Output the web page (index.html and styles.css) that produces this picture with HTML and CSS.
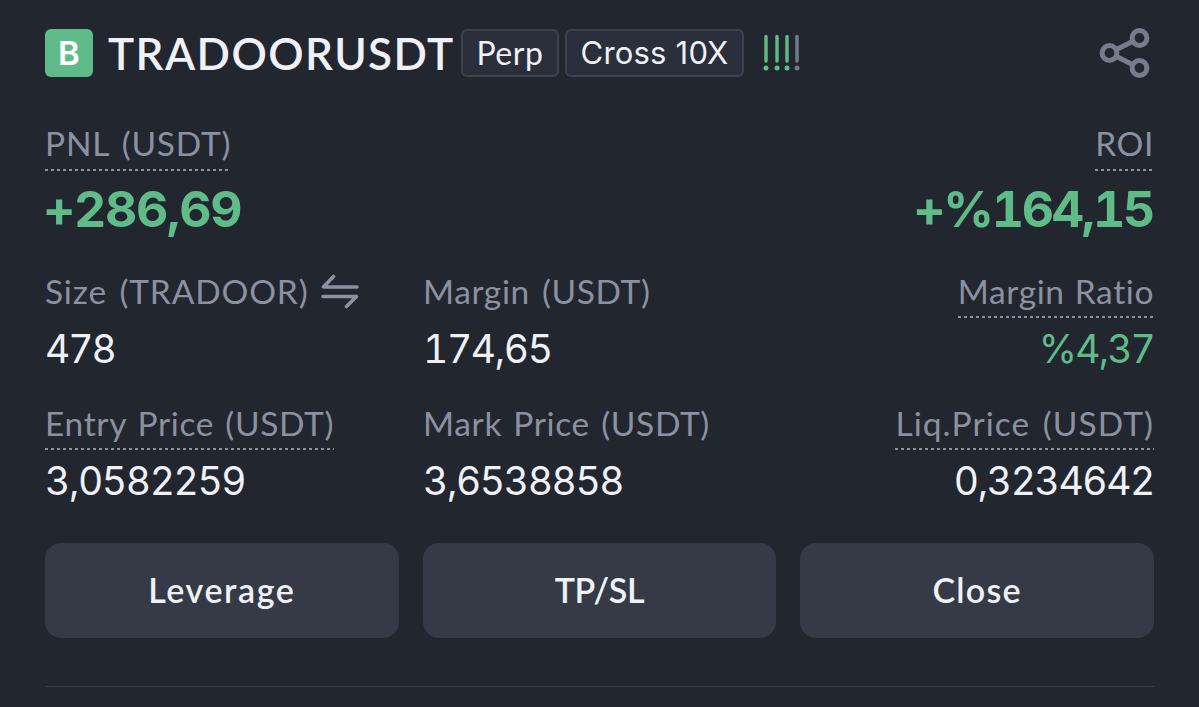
FILE: index.html
```
<!DOCTYPE html>
<html lang="en">
<head>
    <meta charset="UTF-8">
    <title>TRADOORUSDT Position</title>
    <link rel="stylesheet" href="styles.css">
</head>
<body>
    <div class="position">
        <!-- symbol, tags and share button -->
        <div class="header">
            <span class="side">B</span>
            <h1>TRADOORUSDT</h1>
            <span class="tag perp">Perp</span>
            <span class="tag cross">Cross 10X</span>
            <svg class="risk" width="38" height="38" viewBox="0 0 38 38">
                <g stroke-width="3.4" stroke-linecap="round" fill="none">
                    <path class="on" d="M3 2.5V27M14 2.5V27M24 2.5V27"/>
                    <path class="off" d="M34 2.5V27"/>
                </g>
                <g class="on-dots"><circle cx="3" cy="34" r="2.5"/><circle cx="14" cy="34" r="2.5"/><circle cx="24" cy="34" r="2.5"/></g>
                <circle class="off-dot" cx="34" cy="34" r="2.5"/>
            </svg>
            <svg class="share" width="52" height="52" viewBox="0 0 52 52">
                <g stroke-width="5" fill="none">
                    <circle cx="10.5" cy="26" r="7.4"/>
                    <circle cx="40.5" cy="11" r="7.4"/>
                    <circle cx="40.5" cy="41" r="7.4"/>
                    <path d="M17 22.7L34 14.3M17 29.3L34 37.7"/>
                </g>
            </svg>
        </div>

        <!-- profit row -->
        <div class="row profit">
            <div class="stat">
                <span class="label dotted pnl-label">PNL (USDT)</span>
                <span class="value big">+286,69</span>
            </div>
            <div class="stat right">
                <span class="label dotted">ROI</span>
                <span class="value big roi">+%164,15</span>
            </div>
        </div>

        <div class="row sizes">
            <div class="stat">
                <span class="label size-label">Size (TRADOOR)
                    <svg class="swap" width="38" height="36" viewBox="0 0 38 36">
                        <path d="M12.5 2.5L2.5 13H36M2 22.5H35.5L25.5 32.5" stroke-width="3.6" stroke-linecap="round" stroke-linejoin="round" fill="none"/>
                    </svg>
                </span>
                <span class="value size">478</span>
            </div>
            <div class="stat">
                <span class="label">Margin (USDT)</span>
                <span class="value">174,65</span>
            </div>
            <div class="stat right">
                <span class="label dotted ratio-label">Margin Ratio</span>
                <span class="value green">%4,37</span>
            </div>
        </div>

        <div class="row prices">
            <div class="stat">
                <span class="label dotted entry-label">Entry Price (USDT)</span>
                <span class="value">3,0582259</span>
            </div>
            <div class="stat">
                <span class="label mark-label">Mark Price (USDT)</span>
                <span class="value">3,6538858</span>
            </div>
            <div class="stat right">
                <span class="label dotted liq-label">Liq.Price (USDT)</span>
                <span class="value">0,3234642</span>
            </div>
        </div>

        <div class="actions">
            <button type="button" class="leverage">Leverage</button>
            <button type="button" class="tpsl">TP/SL</button>
            <button type="button">Close</button>
        </div>
    </div>
</body>
</html>
```

FILE: styles.css
```
* {
    box-sizing: border-box;
}
body {
    margin: 0;
    height: 707px;
    overflow: hidden;
    background-color: #22262f;
    color: #eff1f7;
    font-family: Lato, "Open Sans", sans-serif;
}
.position {
    margin: 0 45px;
    padding-top: 27px;
    height: 687px;
    border-bottom: 1px solid #383c46;
}
.header {
    display: flex;
    align-items: center;
    height: 52px;
    white-space: nowrap;
}
.side {
    width: 48px;
    height: 48px;
    border-radius: 6px;
    background-color: #5fbc89;
    color: #ffffff;
    font-family: Inter, sans-serif;
    font-size: 33px;
    font-weight: 600;
    line-height: 48px;
    text-align: center;
}
h1 {
    width: 353px;
    margin: 0 0 0 15px;
    font-size: 44px;
    font-weight: 600;
    line-height: 52px;
    letter-spacing: 1.4px;
}
.tag {
    height: 48px;
    border: 2px solid #3d424e;
    border-radius: 6px;
    background-color: #2a2f3b;
    font-size: 32px;
    line-height: 44px;
    text-align: center;
}
.perp {
    width: 98px;
    letter-spacing: 0.6px;
}
.cross {
    width: 179px;
    margin-left: 6px;
    font-family: Inter, sans-serif;
    font-size: 31px;
    letter-spacing: 0.2px;
}
.risk {
    margin-left: 19px;
}
.risk .on {
    stroke: #5fbc89;
}
.risk .off {
    stroke: #767b8b;
}
.on-dots {
    fill: #5fbc89;
}
.off-dot {
    fill: #767b8b;
}
.share {
    margin-left: auto;
    margin-right: 3px;
    stroke: #777c8c;
}
.row {
    display: grid;
    grid-template-columns: 378px 378px 1fr;
    white-space: nowrap;
}
.profit {
    grid-template-columns: 1fr 1fr;
    margin-top: 41px;
}
.sizes {
    margin-top: 20px;
}
.prices {
    margin-top: 19px;
}
.stat {
    display: flex;
    flex-direction: column;
    align-items: flex-start;
}
.right {
    align-items: flex-end;
}
.label {
    height: 51px;
    color: #8c91a0;
    font-size: 33.5px;
    line-height: 48px;
    letter-spacing: 0.6px;
    word-spacing: 3px;
}
.profit .label {
    line-height: 47px;
}
.pnl-label {
    letter-spacing: 0.8px;
}
.size-label {
    letter-spacing: 0.85px;
}
.ratio-label {
    word-spacing: 1px;
}
.entry-label,
.mark-label {
    letter-spacing: 0.65px;
    word-spacing: 2px;
}
.liq-label {
    letter-spacing: 1.05px;
}
.dotted {
    background: repeating-linear-gradient(to right, #8c91a0 0 3px, transparent 3px 6px) left bottom / 100% 2px no-repeat;
}
.swap {
    margin-left: 0;
    vertical-align: -6px;
    stroke: #8c91a0;
}
.value {
    font-family: Inter, sans-serif;
    font-size: 39px;
    line-height: 62px;
    letter-spacing: -1.4px;
    font-feature-settings: "tnum";
}
.size {
    letter-spacing: -2.1px;
}
.right .value {
    margin-right: 0;
}
.big {
    margin-left: -2px;
    color: #5fbc89;
    font-size: 50px;
    font-weight: 700;
    line-height: 76px;
    letter-spacing: -1.3px;
}
.right .roi {
    margin-right: 1px;
    letter-spacing: -2.3px;
}
.green {
    color: #5fbc89;
    letter-spacing: -1.9px;
}
.actions {
    display: grid;
    grid-template-columns: repeat(3, 1fr);
    gap: 24px;
    margin-top: 31px;
}
button {
    height: 95px;
    padding: 0 6px 2px;
    border: none;
    border-radius: 16px;
    background-color: #353a46;
    color: #eff1f7;
    font-family: Lato, "Open Sans", sans-serif;
    font-size: 34px;
    font-weight: 600;
    letter-spacing: 1.2px;
}
.leverage {
    letter-spacing: 1.6px;
}
.tpsl {
    letter-spacing: -0.3px;
}
```
